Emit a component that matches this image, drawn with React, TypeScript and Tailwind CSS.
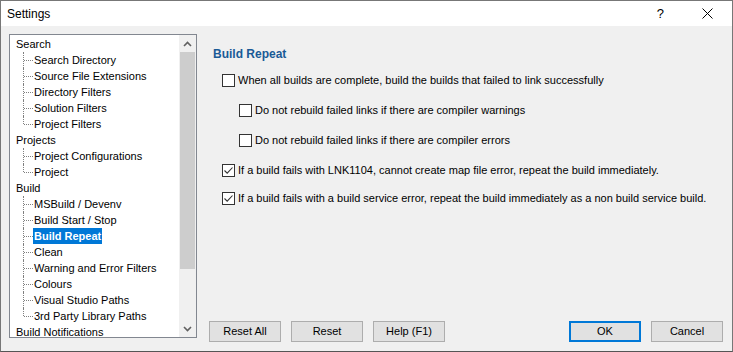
import React from "react";

const font = { fontFamily: '"Liberation Sans", Arial, sans-serif' };

type Node = { label: string; children?: string[] };

const tree: Node[] = [
  {
    label: "Search",
    children: [
      "Search Directory",
      "Source File Extensions",
      "Directory Filters",
      "Solution Filters",
      "Project Filters",
    ],
  },
  { label: "Projects", children: ["Project Configurations", "Project"] },
  {
    label: "Build",
    children: [
      "MSBuild / Devenv",
      "Build Start / Stop",
      "Build Repeat",
      "Clean",
      "Warning and Error Filters",
      "Colours",
      "Visual Studio Paths",
      "3rd Party Library Paths",
    ],
  },
  { label: "Build Notifications" },
];

const TreeChild: React.FC<{ label: string; last: boolean; selected: boolean }> = ({
  label,
  last,
  selected,
}) => (
  <div className="flex h-4 items-center">
    <div className="relative h-4 w-[23px] shrink-0">
      <div
        className={`absolute left-[13px] top-0 border-l border-dotted border-[#808080] ${
          last ? "h-2" : "h-4"
        }`}
      />
      <div className="absolute left-[14px] top-2 w-[9px] border-t border-dotted border-[#808080]" />
    </div>
    <span
      className={`px-[1px] leading-4 whitespace-nowrap ${
        selected ? "bg-[#0078d7] text-white font-bold" : "text-black"
      }`}
    >
      {label}
    </span>
  </div>
);

const Checkbox: React.FC<{ checked?: boolean; label: string; indent?: boolean; className?: string }> = ({
  checked,
  label,
  indent,
  className,
}) => (
  <div className={`flex h-4 items-center gap-[3px] ${indent ? "pl-[30px]" : "pl-[13px]"} ${className ?? ""}`}>
    <div className="flex h-[13px] w-[13px] shrink-0 items-center justify-center border border-[#333333] bg-white">
      {checked && (
        <svg width="11" height="11" viewBox="0 0 11 11" fill="none">
          <path d="M1.5 5.5 L4.2 8.2 L9.5 2.5" stroke="#333333" strokeWidth="1.1" />
        </svg>
      )}
    </div>
    <span className="whitespace-nowrap leading-4 text-black">{label}</span>
  </div>
);

const Button: React.FC<{ label: string; primary?: boolean }> = ({ label, primary }) => (
  <button
    className={`h-[21px] w-[72px] bg-[#e1e1e1] text-black ${
      primary ? "border-2 border-[#0078d7]" : "border border-[#adadad]"
    }`}
  >
    {label}
  </button>
);

export default function App() {
  return (
    <div
      className="flex h-[352px] w-[733px] flex-col border border-[#777777] border-b-[#555555] text-[11px]"
      style={font}
    >
      <div className="flex h-[25px] shrink-0 items-center bg-white">
        <span className="pl-[6px] text-[12px] text-black">Settings</span>
        <span className="ml-auto mr-[38px] text-[13px] text-black">?</span>
        <svg className="mr-[19px]" width="11" height="11" viewBox="0 0 11 11">
          <path d="M0.5 0.5 L10.5 10.5 M10.5 0.5 L0.5 10.5" stroke="#000" strokeWidth="1" />
        </svg>
      </div>

      <div className="flex flex-1 bg-[#f0f0f0] pl-[8px] pt-[8px] pb-[9px]">
        {/* tree */}
        <div className="flex h-[304px] w-[188px] shrink-0 border border-[#828790] bg-white">
          <div className="flex-1 overflow-hidden pt-px pl-[6px]">
            {tree.map((n) => (
              <div key={n.label}>
                <div className="h-4 leading-4 text-black whitespace-nowrap">{n.label}</div>
                {n.children?.map((c, i) => (
                  <div key={c} className="-ml-[6px]">
                    <TreeChild
                      label={c}
                      last={i === n.children!.length - 1}
                      selected={c === "Build Repeat"}
                    />
                  </div>
                ))}
              </div>
            ))}
          </div>
          <div className="flex w-[17px] shrink-0 flex-col bg-[#f0f0f0]">
            <div className="flex h-[17px] items-center justify-center">
              <svg width="9" height="6" viewBox="0 0 9 6" fill="none">
                <path d="M1 5 L4.5 1.5 L8 5" stroke="#606060" strokeWidth="1.6" />
              </svg>
            </div>
            <div className="mx-px h-[217px] bg-[#cdcdcd]" />
            <div className="flex-1" />
            <div className="flex h-[17px] items-center justify-center">
              <svg width="9" height="6" viewBox="0 0 9 6" fill="none">
                <path d="M1 1 L4.5 4.5 L8 1" stroke="#606060" strokeWidth="1.6" />
              </svg>
            </div>
          </div>
        </div>

        {/* content */}
        <div className="flex flex-1 flex-col pl-[12px] pr-[9px]">
          <div className="pl-[4px] pt-[11px] text-[12px] font-bold text-[#1a5a96]">Build Repeat</div>
          <Checkbox className="mt-[9px]" label="When all builds are complete, build the builds that failed to link successfully" />
          <Checkbox className="mt-[14px]" indent label="Do not rebuild failed links if there are compiler warnings" />
          <Checkbox className="mt-[14px]" indent label="Do not rebuild failed links if there are compiler errors" />
          <Checkbox className="mt-[14px]" checked label="If a build fails with LNK1104, cannot create map file error, repeat the build immediately." />
          <Checkbox className="mt-[12px]" checked label="If a build fails with a build service error, repeat the build immediately as a non build service build." />

          <div className="mt-auto flex items-center gap-[10px]">
            <Button label="Reset All" />
            <Button label="Reset" />
            <Button label="Help (F1)" />
            <div className="flex-1" />
            <Button label="OK" primary />
            <Button label="Cancel" />
          </div>
        </div>
      </div>
    </div>
  );
}
